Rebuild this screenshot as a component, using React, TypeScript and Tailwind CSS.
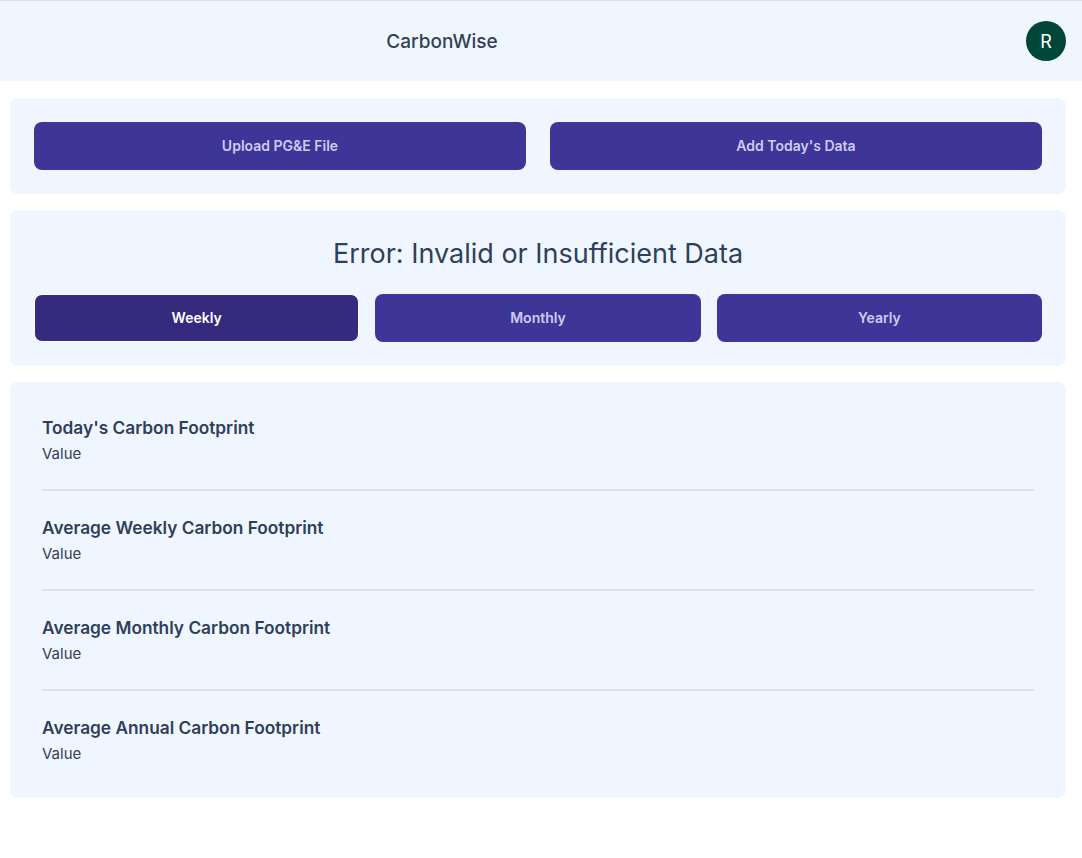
import React from "react";

const items = [
  "Today's Carbon Footprint",
  "Average Weekly Carbon Footprint",
  "Average Monthly Carbon Footprint",
  "Average Annual Carbon Footprint",
];

export default function App() {
  return (
    <div
      className="min-h-[858px] bg-white text-[#334155]"
      style={{ fontFamily: "Inter, 'Noto Sans', sans-serif" }}
    >
      <header className="flex h-[81px] items-center border-t border-[#dde1e8] bg-[#eff6ff]">
        <div className="flex flex-1 justify-center pt-0.5">
          <span className="text-[19px] font-medium text-[#334155]">CarbonWise</span>
        </div>
        <div className="flex w-[198px] justify-end pr-4">
          <div className="flex h-10 w-10 items-center justify-center rounded-full bg-[#004738] text-[18px] text-white">
            R
          </div>
        </div>
      </header>

      <main className="ml-[10px] mr-[16px] mt-[17px] flex flex-col gap-4">
        <section className="grid grid-cols-2 gap-6 rounded-lg bg-[#eff6ff] p-6">
          <button className="h-12 rounded-lg bg-[#3d3598] text-sm font-semibold text-[#cfcbf0]">
            Upload PG&amp;E File
          </button>
          <button className="h-12 rounded-lg bg-[#3d3598] text-sm font-semibold text-[#cfcbf0]">
            Add Today's Data
          </button>
        </section>

        <section className="rounded-lg bg-[#eff6ff] px-6 pb-6 pt-7">
          <h2 className="text-center text-[27px] font-normal leading-8 text-[#2f4058]">
            Error: Invalid or Insufficient Data
          </h2>
          <div className="mt-6 grid grid-cols-3 gap-4">
            <button className="h-12 rounded-lg border border-white bg-[#352a7d] text-sm font-semibold text-white">
              Weekly
            </button>
            <button className="h-12 rounded-lg bg-[#3d3598] text-sm font-semibold text-[#cfcbf0]">
              Monthly
            </button>
            <button className="h-12 rounded-lg bg-[#3d3598] text-sm font-semibold text-[#cfcbf0]">
              Yearly
            </button>
          </div>
        </section>

        <section className="rounded-lg bg-[#eff6ff] px-8 pb-8 pt-8">
          {items.map((t, i) => (
            <div key={t}>
              {i > 0 && <div className="mb-[23px] mt-[23px] h-[2px] bg-[#dde3ec]" />}
              <div className="text-[17.3px] font-semibold leading-7 text-[#2f4058]">{t}</div>
              <div className="text-[15px] leading-6 text-[#334155]">Value</div>
            </div>
          ))}
        </section>
      </main>
    </div>
  );
}
